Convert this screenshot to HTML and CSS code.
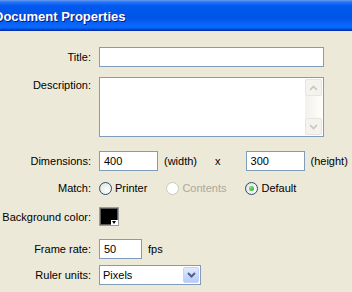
FILE: index.html
```html
<!DOCTYPE html>
<html>
<head>
<meta charset="utf-8" />
<title>Document Properties</title>
<link rel="stylesheet" href="styles.css">
</head>
<body>
<h1 class="titlebar">Document Properties</h1>
<div class="form">
  <div class="row row_title">
    <label for="d_title">Title:</label>
    <input type="text" id="d_title" class="field wide" />
  </div>
  <div class="row row_desc">
    <label for="d_desc" class="top">Description:</label>
    <div class="memo">
      <textarea id="d_desc"></textarea>
      <div class="vscroll">
        <div class="sbtn"><svg width="9" height="6" viewBox="0 0 9 6"><path d="M1 5 L4.5 1.5 L8 5" fill="none" stroke="#c9c7ba" stroke-width="1.6"/></svg></div>
        <div class="strack"></div>
        <div class="sbtn"><svg width="9" height="6" viewBox="0 0 9 6"><path d="M1 1 L4.5 4.5 L8 1" fill="none" stroke="#c9c7ba" stroke-width="1.6"/></svg></div>
      </div>
    </div>
  </div>
  <div class="row row_dims">
    <label for="d_width">Dimensions:</label>
    <input type="text" id="d_width" class="field num" value="400" />
    <span class="unit">(width)</span>
    <span class="times">x</span>
    <input type="text" id="d_height" class="field num" value="300" />
    <span class="unit">(height)</span>
  </div>
  <div class="row row_match">
    <label>Match:</label>
    <span class="opt"><span class="radio"></span>Printer</span>
    <span class="opt disabled"><span class="radio"></span>Contents</span>
    <span class="opt"><span class="radio checked"></span>Default</span>
  </div>
  <div class="row row_bg">
    <label>Background color:</label>
    <div class="swatch"><span class="swatch_arrow"></span></div>
  </div>
  <div class="row row_fps">
    <label for="d_fps">Frame rate:</label>
    <input type="text" id="d_fps" class="field fps" value="50" />
    <span class="unit">fps</span>
  </div>
  <div class="row row_ruler">
    <label>Ruler units:</label>
    <div class="select">
      <span class="select_value">Pixels</span>
      <span class="select_btn"><svg width="9" height="6" viewBox="0 0 9 6"><path d="M1 1 L4.5 4.5 L8 1" fill="none" stroke="#4d6185" stroke-width="2"/></svg></span>
    </div>
  </div>
</div>
</body>
</html>
```

FILE: styles.css
```css
* {
  box-sizing: border-box;
}
body {
  margin: 0;
  background-color: #ece9d8;
  font-family: 'Liberation Sans', Arial, sans-serif;
  font-size: 11px;
  color: #000;
}
.titlebar {
  margin: 0;
  height: 31px;
  padding: 9px 0 0 0;
  text-indent: -6px;
  font-family: 'Liberation Sans', Arial, sans-serif;
  font-size: 13px;
  font-weight: bold;
  color: #fff;
  text-shadow: 1px 1px 0 #0a1883;
  white-space: nowrap;
  overflow: hidden;
  background: linear-gradient(to bottom, #7c9fe0 0, #3b84ff 1px, #1a6cf5 3px, #0058ee 6px, #0055e8 18px, #0863fa 24px, #0a6bff 27px, #0054e0 29px, #0034b8 30px, #0030a8 31px);
}
.form {
  display: flex;
  flex-direction: column;
}
.row {
  display: flex;
  align-items: center;
}
.row > label {
  width: 91px;
  margin-right: 8px;
  text-align: right;
  white-space: nowrap;
}
.row > label.top {
  align-self: flex-start;
  padding-top: 2px;
}
.row_title { margin-top: 16px; }
.row_desc { margin-top: 10px; }
.row_dims { margin-top: 14px; }
.row_match { margin-top: 9px; height: 16px; }
.row_bg { margin-top: 11px; }
.row_fps { margin-top: 13px; }
.row_ruler { margin-top: 6px; }

.field {
  height: 20px;
  border: 1px solid #7f9db9;
  background: #fff;
  padding: 0 4px;
  margin: 0;
  font-family: inherit;
  font-size: 11px;
  outline: none;
}
.field.wide { width: 225px; }
.field.num { width: 59px; }
.field.fps { width: 43px; }
.unit {
  margin-left: 6px;
}
.times {
  margin: 0 25px 0 18px;
}

.memo {
  width: 225px;
  height: 60px;
  border: 1px solid #7f9db9;
  background: #fff;
  display: flex;
}
.memo textarea {
  flex: 1;
  border: none;
  resize: none;
  outline: none;
  margin: 0;
  padding: 2px 4px;
  font-family: inherit;
  font-size: 11px;
}
.vscroll {
  width: 17px;
  margin: 1px 1px 1px 0;
  display: flex;
  flex-direction: column;
  background: linear-gradient(to right, #f3f1ec, #fefefb);
}
.sbtn {
  height: 17px;
  border: 1px solid #e8e6dc;
  border-radius: 2px;
  background: #f4f3ee;
  display: flex;
  align-items: center;
  justify-content: center;
}
.strack {
  flex: 1;
}

.opt {
  display: flex;
  align-items: center;
  margin-right: 19px;
}
.opt.disabled {
  color: #aca899;
}
.radio {
  width: 13px;
  height: 13px;
  margin-right: 3px;
  border: 1px solid #1c5180;
  border-radius: 50%;
  background: radial-gradient(circle at 65% 65%, #fff 0, #ecebe6 60%, #d6d4cb 100%);
  position: relative;
}
.opt.disabled .radio {
  border-color: #cac8bb;
  background: #fff;
}
.radio.checked::after {
  content: '';
  position: absolute;
  left: 3px;
  top: 3px;
  width: 5px;
  height: 5px;
  border-radius: 50%;
  background: radial-gradient(circle at 35% 35%, #7be37b, #21a121);
}

.swatch {
  width: 20px;
  height: 19px;
  border: 1px solid #9d9d9d;
  background: #000;
  box-shadow: inset 0 0 0 1px #5a5a5a;
  position: relative;
}
.swatch_arrow {
  position: absolute;
  right: 0;
  bottom: 0;
  width: 7px;
  height: 5px;
  background: #fff;
}
.swatch_arrow::after {
  content: '';
  position: absolute;
  left: 1px;
  top: 1px;
  border-left: 2.5px solid transparent;
  border-right: 2.5px solid transparent;
  border-top: 3px solid #000;
}

.select {
  width: 102px;
  height: 20px;
  border: 1px solid #7f9db9;
  background: #fff;
  display: flex;
  align-items: center;
  padding: 1px;
}
.select_value {
  flex: 1;
  padding-left: 2px;
}
.select_btn {
  width: 16px;
  height: 16px;
  border: 1px solid #c3d3fd;
  border-radius: 2px;
  background: linear-gradient(to bottom, #e2ebfe, #b7cbfa);
  display: flex;
  align-items: center;
  justify-content: center;
}
```
